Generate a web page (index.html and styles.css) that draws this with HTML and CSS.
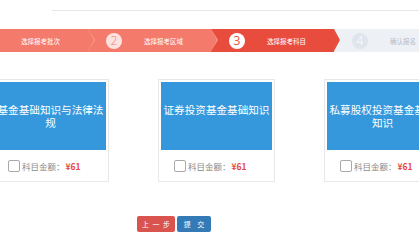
FILE: index.html
```html
<!DOCTYPE html>
<html lang="zh-CN">
    <head>
        <meta charset="UTF-8">
        <meta name="viewport" content="width=device-width, initial-scale=1.0">
        <title>选择报考科目</title>
        <link rel="stylesheet" href="styles.css">
    </head>
    <body>
        <div class="top-line"></div>

        <div class="wrap">
            <!-- Steps -->
            <div class="steps">
                <div class="step done"><span class="num">1</span><span class="label">选择报考批次</span></div>
                <div class="step done"><span class="num">2</span><span class="label">选择报考区域</span></div>
                <div class="step active"><span class="num">3</span><span class="label">选择报考科目</span></div>
                <div class="step todo"><span class="num">4</span><span class="label">确认报名</span></div>
            </div>

            <!-- Subjects -->
            <div class="cards">
                <div class="card">
                    <div class="card-title">基金基础知识与法律法规</div>
                    <label class="card-foot">
                        <span class="check"></span>
                        <span class="fee-label">科目金额：</span>
                        <span class="fee">¥61</span>
                    </label>
                </div>
                <div class="card">
                    <div class="card-title">证券投资基金基础知识</div>
                    <label class="card-foot">
                        <span class="check"></span>
                        <span class="fee-label">科目金额：</span>
                        <span class="fee">¥61</span>
                    </label>
                </div>
                <div class="card">
                    <div class="card-title">私募股权投资基金基础知识</div>
                    <label class="card-foot">
                        <span class="check"></span>
                        <span class="fee-label">科目金额：</span>
                        <span class="fee">¥61</span>
                    </label>
                </div>
            </div>

            <div class="actions">
                <button class="btn btn-prev">上 一 步</button>
                <button class="btn btn-submit">提 交</button>
            </div>
        </div>
    </body>
</html>
```

FILE: styles.css
```css
/* General Styles */
body {
    margin: 0;
    padding: 0;
    background-color: white;
    font-family: "Noto Sans CJK SC", "Noto Sans", sans-serif;
    overflow: hidden;
}

.top-line {
    height: 10px;
    margin-left: 52px;
    border-bottom: 1px solid #e6e6e6;
}

.wrap {
    width: 492px;
    margin-left: -35px;
}

/* Steps */
.steps {
    display: flex;
    margin-top: 18px;
    height: 23px;
}

.step {
    position: relative;
    width: 123px;
    height: 23px;
    display: flex;
    align-items: center;
    box-sizing: border-box;
    padding-left: 18px;
}

.step::before,
.step::after {
    content: "";
    position: absolute;
    top: 0;
    width: 0;
    height: 0;
    border-top: 11.5px solid transparent;
    border-bottom: 11.5px solid transparent;
    z-index: 2;
}

.step::before {
    right: -7px;
    border-left: 7px solid #f8a59b;
}

.step::after {
    right: -6px;
    border-left: 6px solid #f47a6c;
}

.step.done {
    background-color: #f47a6c;
}

.step.active {
    background-color: #e84c3d;
}

.step.active::before {
    display: none;
}

.step.active::after {
    border-left-color: #e84c3d;
}

.step.todo {
    background-color: #edf0f5;
}

.step.todo::before,
.step.todo::after {
    display: none;
}

.num {
    width: 16px;
    height: 16px;
    border-radius: 50%;
    display: flex;
    align-items: center;
    justify-content: center;
    font-family: "Open Sans", sans-serif;
    font-weight: 300;
    font-size: 12px;
    line-height: 1;
}

.label {
    margin-left: 22px;
    font-size: 6.5px;
    color: white;
    white-space: nowrap;
}

.done .num {
    background-color: #fde3df;
    color: #f47a6c;
}

.active .num {
    background-color: white;
    color: #e84c3d;
    font-weight: 400;
}

.todo .num {
    background-color: #dfe4ed;
    color: white;
}

.todo .label {
    color: #b5bac5;
}

/* Cards */
.cards {
    display: flex;
    gap: 49px;
    margin-top: 27px;
    padding-left: 27px;
}

.card {
    width: 117px;
    flex-shrink: 0;
    box-sizing: border-box;
    border: 1px solid #e8e8e8;
    padding: 2px 2px 0;
}

.card-title {
    height: 68px;
    box-sizing: border-box;
    padding: 21px 0 0;
    background-color: #3598dc;
    color: white;
    font-size: 10.6px;
    line-height: 13px;
    text-align: center;
}

.card-foot {
    height: 31px;
    display: flex;
    align-items: center;
    padding-left: 13px;
    font-size: 8.5px;
}

.check {
    width: 10px;
    height: 10px;
    border: 1px solid #a9a9a9;
    border-radius: 2px;
    background-color: white;
    margin-right: 2px;
}

.fee-label {
    color: #8a8a8a;
}

.fee {
    color: #e8473b;
    font-weight: bold;
    margin-left: 1px;
}

/* Buttons */
.actions {
    display: flex;
    gap: 2px;
    margin-top: 34px;
    padding-left: 172px;
}

.btn {
    height: 16px;
    border: none;
    border-radius: 2px;
    color: white;
    font-family: "Noto Sans CJK SC", sans-serif;
    font-size: 7px;
    padding: 0;
    cursor: pointer;
}

.btn-prev {
    width: 38px;
    background-color: #d9534f;
    word-spacing: 2px;
}

.btn-submit {
    width: 34px;
    background-color: #337ab7;
    word-spacing: 5px;
}
```
